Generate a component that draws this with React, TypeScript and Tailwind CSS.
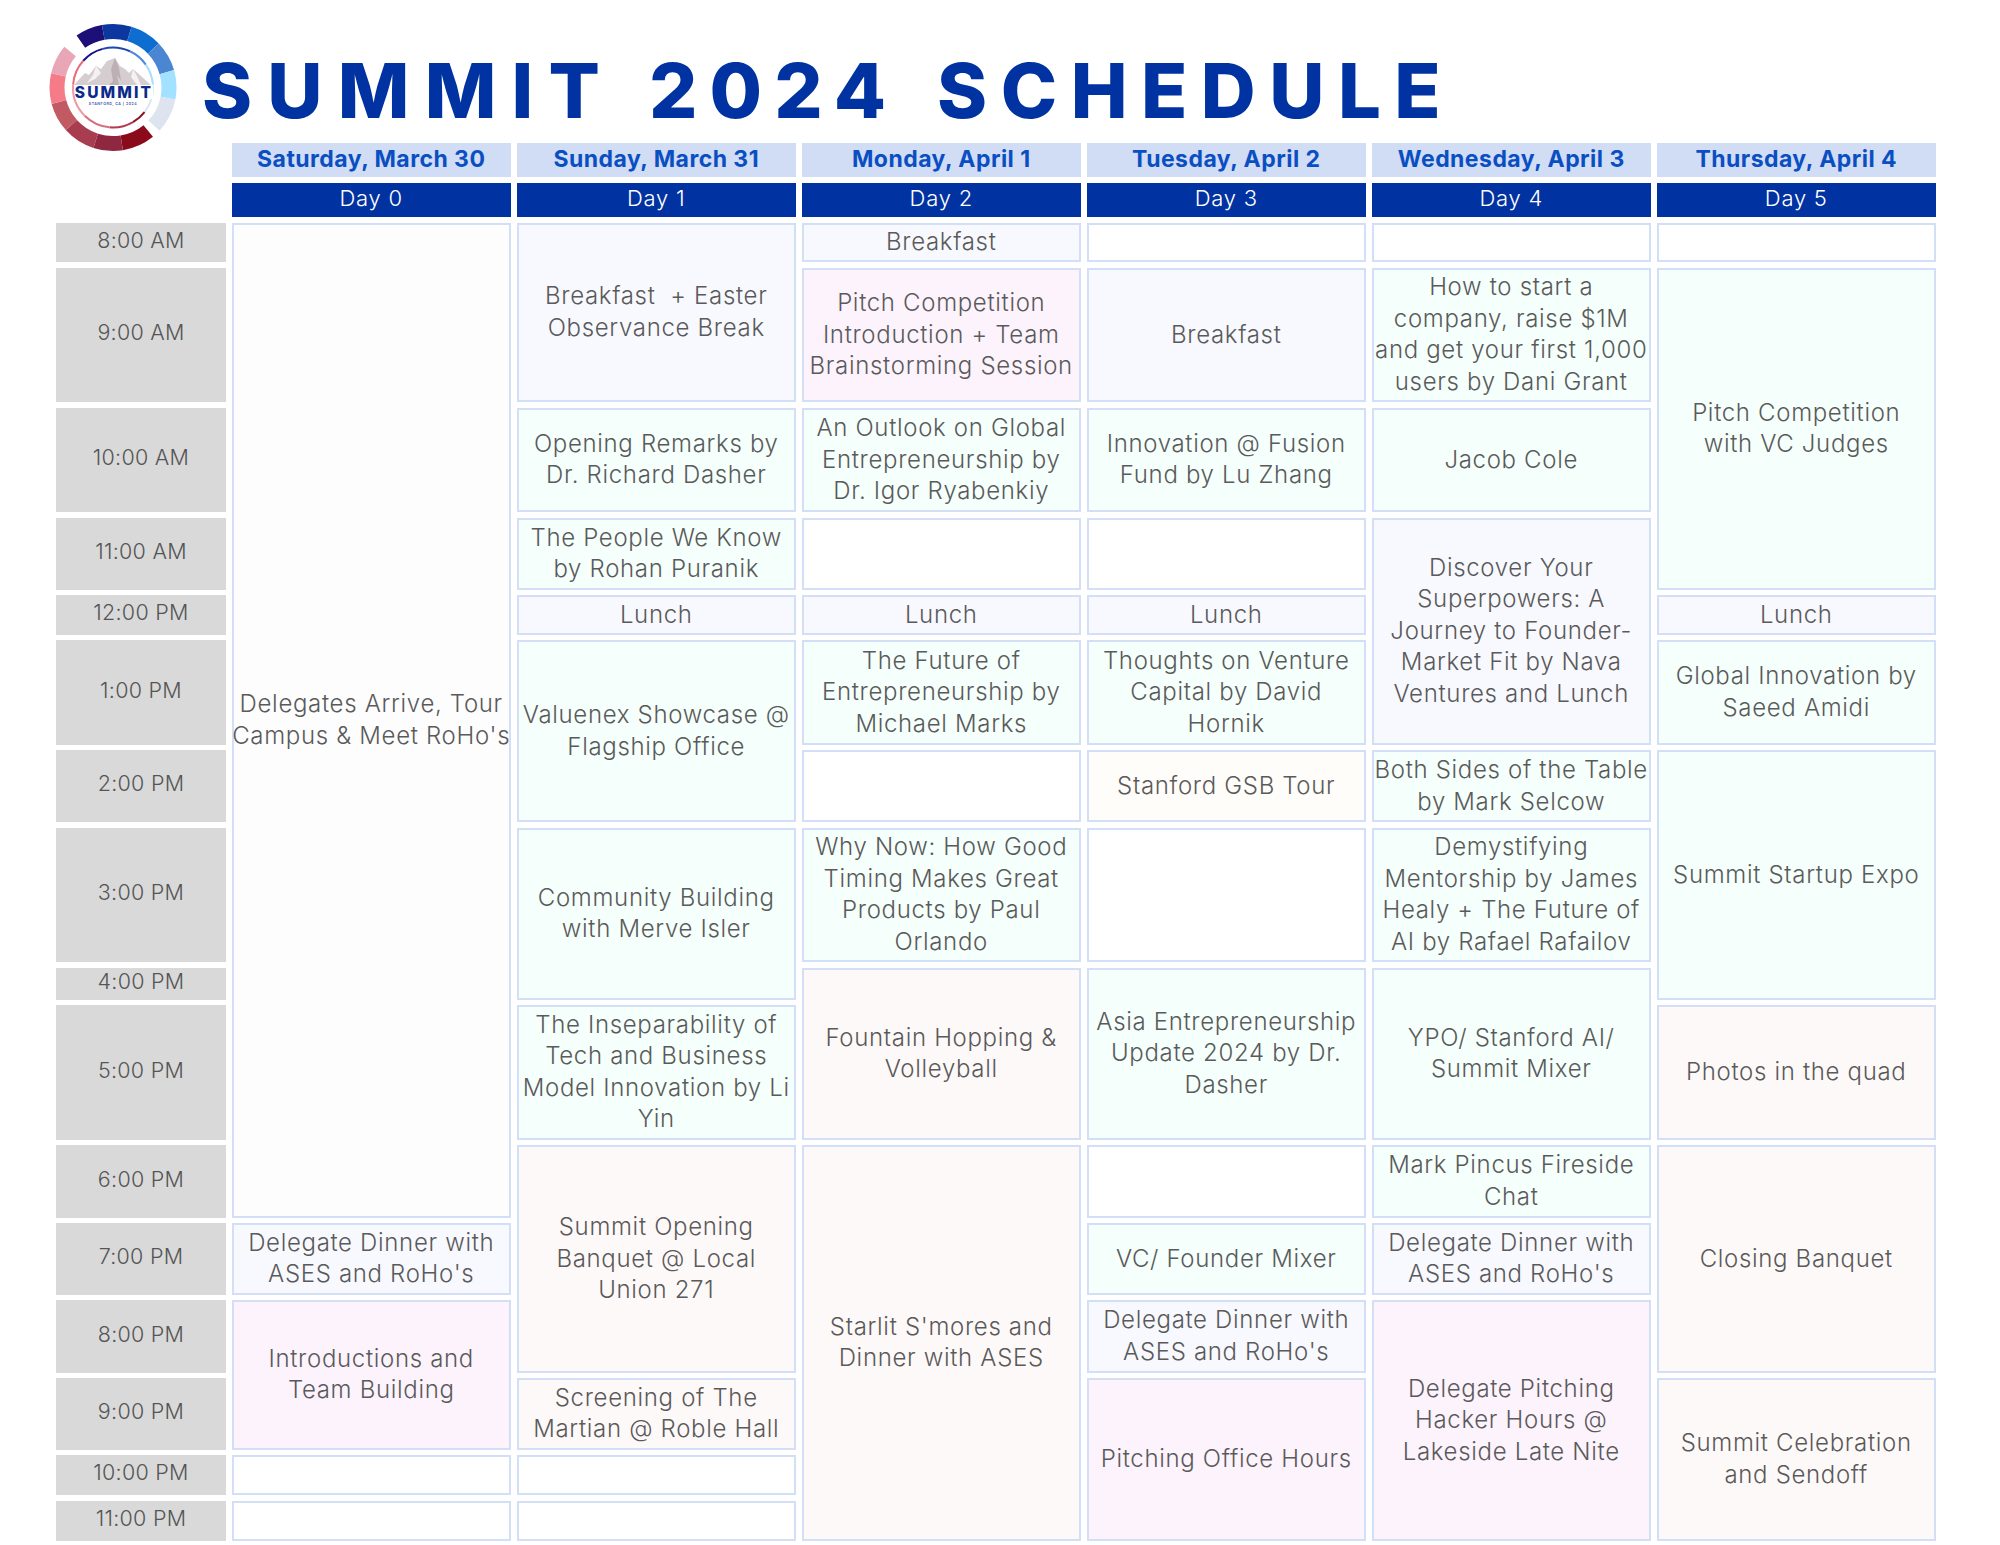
import React from "react";

const mint = "bg-[#f5fffc]";
const lav = "bg-[#f8f9ff]";
const pink = "bg-[#fdf3fd]";
const peach = "bg-[#fef9f9]";
const beige = "bg-[#fffdf9]";
const none = "bg-white";

type C = { cls: string; bg: string; t?: string[] };

const days: { name: string; day: string; col: string; cells: C[] }[] = [
  {
    name: "Saturday, March 30", day: "Day 0", col: "col-start-2",
    cells: [
      { cls: "row-[3/14]", bg: "bg-[#fdfdfe]", t: ["Delegates Arrive, Tour", "Campus & Meet RoHo's"] },
      { cls: "row-[14/15]", bg: lav, t: ["Delegate Dinner with", "ASES and RoHo's"] },
      { cls: "row-[15/17]", bg: pink, t: ["Introductions and", "Team Building"] },
      { cls: "row-[17/18]", bg: none },
      { cls: "row-[18/19]", bg: none },
    ],
  },
  {
    name: "Sunday, March 31", day: "Day 1", col: "col-start-3",
    cells: [
      { cls: "row-[3/5]", bg: lav, t: ["Breakfast  + Easter", "Observance Break"] },
      { cls: "row-[5/6]", bg: mint, t: ["Opening Remarks by", "Dr. Richard Dasher"] },
      { cls: "row-[6/7]", bg: mint, t: ["The People We Know", "by Rohan Puranik"] },
      { cls: "row-[7/8]", bg: lav, t: ["Lunch"] },
      { cls: "row-[8/10]", bg: mint, t: ["Valuenex Showcase @", "Flagship Office"] },
      { cls: "row-[10/12]", bg: mint, t: ["Community Building", "with Merve Isler"] },
      { cls: "row-[12/13]", bg: mint, t: ["The Inseparability of", "Tech and Business", "Model Innovation by Li", "Yin"] },
      { cls: "row-[13/16]", bg: peach, t: ["Summit Opening", "Banquet @ Local", "Union 271"] },
      { cls: "row-[16/17]", bg: peach, t: ["Screening of The", "Martian @ Roble Hall"] },
      { cls: "row-[17/18]", bg: none },
      { cls: "row-[18/19]", bg: none },
    ],
  },
  {
    name: "Monday, April 1", day: "Day 2", col: "col-start-4",
    cells: [
      { cls: "row-[3/4]", bg: lav, t: ["Breakfast"] },
      { cls: "row-[4/5]", bg: pink, t: ["Pitch Competition", "Introduction + Team", "Brainstorming Session"] },
      { cls: "row-[5/6]", bg: mint, t: ["An Outlook on Global", "Entrepreneurship by", "Dr. Igor Ryabenkiy"] },
      { cls: "row-[6/7]", bg: none },
      { cls: "row-[7/8]", bg: lav, t: ["Lunch"] },
      { cls: "row-[8/9]", bg: mint, t: ["The Future of", "Entrepreneurship by", "Michael Marks"] },
      { cls: "row-[9/10]", bg: none },
      { cls: "row-[10/11]", bg: mint, t: ["Why Now: How Good", "Timing Makes Great", "Products by Paul", "Orlando"] },
      { cls: "row-[11/13]", bg: peach, t: ["Fountain Hopping &", "Volleyball"] },
      { cls: "row-[13/19]", bg: peach, t: ["Starlit S'mores and", "Dinner with ASES"] },
    ],
  },
  {
    name: "Tuesday, April 2", day: "Day 3", col: "col-start-5",
    cells: [
      { cls: "row-[3/4]", bg: none },
      { cls: "row-[4/5]", bg: lav, t: ["Breakfast"] },
      { cls: "row-[5/6]", bg: mint, t: ["Innovation @ Fusion", "Fund by Lu Zhang"] },
      { cls: "row-[6/7]", bg: none },
      { cls: "row-[7/8]", bg: lav, t: ["Lunch"] },
      { cls: "row-[8/9]", bg: mint, t: ["Thoughts on Venture", "Capital by David", "Hornik"] },
      { cls: "row-[9/10]", bg: beige, t: ["Stanford GSB Tour"] },
      { cls: "row-[10/11]", bg: none },
      { cls: "row-[11/13]", bg: mint, t: ["Asia Entrepreneurship", "Update 2024 by Dr.", "Dasher"] },
      { cls: "row-[13/14]", bg: none },
      { cls: "row-[14/15]", bg: mint, t: ["VC/ Founder Mixer"] },
      { cls: "row-[15/16]", bg: lav, t: ["Delegate Dinner with", "ASES and RoHo's"] },
      { cls: "row-[16/19]", bg: pink, t: ["Pitching Office Hours"] },
    ],
  },
  {
    name: "Wednesday, April 3", day: "Day 4", col: "col-start-6",
    cells: [
      { cls: "row-[3/4]", bg: none },
      { cls: "row-[4/5]", bg: mint, t: ["How to start a", "company, raise $1M", "and get your first 1,000", "users by Dani Grant"] },
      { cls: "row-[5/6]", bg: mint, t: ["Jacob Cole"] },
      { cls: "row-[6/9]", bg: lav, t: ["Discover Your", "Superpowers: A", "Journey to Founder-", "Market Fit by Nava", "Ventures and Lunch"] },
      { cls: "row-[9/10]", bg: mint, t: ["Both Sides of the Table", "by Mark Selcow"] },
      { cls: "row-[10/11]", bg: mint, t: ["Demystifying", "Mentorship by James", "Healy + The Future of", "AI by Rafael Rafailov"] },
      { cls: "row-[11/13]", bg: mint, t: ["YPO/ Stanford AI/", "Summit Mixer"] },
      { cls: "row-[13/14]", bg: mint, t: ["Mark Pincus Fireside", "Chat"] },
      { cls: "row-[14/15]", bg: lav, t: ["Delegate Dinner with", "ASES and RoHo's"] },
      { cls: "row-[15/19]", bg: pink, t: ["Delegate Pitching", "Hacker Hours @", "Lakeside Late Nite"] },
    ],
  },
  {
    name: "Thursday, April 4", day: "Day 5", col: "col-start-7",
    cells: [
      { cls: "row-[3/4]", bg: none },
      { cls: "row-[4/7]", bg: mint, t: ["Pitch Competition", "with VC Judges"] },
      { cls: "row-[7/8]", bg: lav, t: ["Lunch"] },
      { cls: "row-[8/9]", bg: mint, t: ["Global Innovation by", "Saeed Amidi"] },
      { cls: "row-[9/12]", bg: mint, t: ["Summit Startup Expo"] },
      { cls: "row-[12/13]", bg: peach, t: ["Photos in the quad"] },
      { cls: "row-[13/16]", bg: peach, t: ["Closing Banquet"] },
      { cls: "row-[16/19]", bg: peach, t: ["Summit Celebration", "and Sendoff"] },
    ],
  },
];

const times: [string, string][] = [
  ["8:00 AM", "row-[3/4]"], ["9:00 AM", "row-[4/5]"], ["10:00 AM", "row-[5/6]"], ["11:00 AM", "row-[6/7]"],
  ["12:00 PM", "row-[7/8]"], ["1:00 PM", "row-[8/9]"], ["2:00 PM", "row-[9/10]"], ["3:00 PM", "row-[10/11]"],
  ["4:00 PM", "row-[11/12]"], ["5:00 PM", "row-[12/13]"], ["6:00 PM", "row-[13/14]"], ["7:00 PM", "row-[14/15]"],
  ["8:00 PM", "row-[15/16]"], ["9:00 PM", "row-[16/17]"], ["10:00 PM", "row-[17/18]"], ["11:00 PM", "row-[18/19]"],
];

function arc(r1: number, r2: number, a0: number, a1: number) {
  const p = (r: number, a: number) => {
    const t = ((a - 90) * Math.PI) / 180;
    return `${(64 + r * Math.cos(t)).toFixed(2)} ${(64.5 + r * Math.sin(t)).toFixed(2)}`;
  };
  const large = a1 - a0 > 180 ? 1 : 0;
  return `M${p(r2, a0)}A${r2} ${r2} 0 ${large} 1 ${p(r2, a1)}L${p(r1, a1)}A${r1} ${r1} 0 ${large} 0 ${p(r1, a0)}Z`;
}

const ring: [number, number, string][] = [
  [-35, -10, "#1d0f78"], [-10, 17, "#0b379f"], [17, 46, "#0d6dd0"], [46, 74, "#4b86d2"], [74, 101, "#a2e1ff"], [101, 133, "#dde4f0"],
  [141, 171, "#8b0a1c"], [171, 198, "#8f2741"], [198, 228, "#a83d50"], [228, 255, "#c15a62"], [255, 283, "#f67b89"], [283, 310, "#e8a6b6"],
];
const thin: [number, number, string][] = [
  [-48, -15, "#14128a"], [-15, 25, "#1c46b0"], [25, 55, "#4f8ada"], [55, 85, "#a9dcff"], [85, 128, "#dbe7f5"],
  [128, 150, "#8b1028"], [150, 185, "#b03c50"], [185, 225, "#d8707c"], [225, 275, "#ef9aa4"], [275, 312, "#e86a7c"],
];

function Logo() {
  return (
    <svg viewBox="0 0 128 129" className="w-[128px] h-[129px] shrink-0">
      {ring.map(([a, b, c]) => <path key={a} d={arc(48.5, 63.5, a, b)} fill={c} />)}
      {thin.map(([a, b, c]) => <path key={a} d={arc(39, 41, a, b)} fill={c} />)}
      <polygon points="25,62 36,50 40,52 47,43 52,46 58,38 66,35 71,43 76,46 80,50 84,46 92,53 103,63" fill="#d6cdd0" />
      <polygon points="66,35 62,46 64,58 60,62 70,62 68,52 72,58 70,45" fill="#bdb0b4" />
      <polygon points="47,43 44,52 38,60 46,56 52,50" fill="#f4f1f2" />
      <polygon points="84,46 82,54 88,62 92,62 88,53" fill="#f4f1f2" />
      <rect x="26" y="62" width="78" height="14" fill="#ffffff" />
      <text x="65" y="74.5" textAnchor="middle" fill="#0b2a8c" fontFamily="Inter, sans-serif" fontWeight="800" fontSize="15.5" letterSpacing="2.1">SUMMIT</text>
      <text x="64" y="82" textAnchor="middle" fill="#3a55a8" fontFamily="Inter, sans-serif" fontWeight="600" fontSize="3.6" letterSpacing="0.5">STANFORD, CA | 2024</text>
    </svg>
  );
}

export default function App() {
  return (
    <div className="w-[2000px] h-[1545px] bg-white overflow-hidden font-['Inter',sans-serif]">
      <div className="h-[143px] flex pl-[49px] pt-[23px]">
        <Logo />
        <h1 className="ml-[25px] mt-[21px] text-[76px] leading-[92px] font-extrabold text-[#0033a1] whitespace-pre">
          <span className="tracking-[0.2em]">SUMMIT </span>
          <span className="ml-[2px] tracking-[0.16em]">2024 </span>
          <span className="ml-[10px] tracking-[0.177em]">SCHEDULE</span>
        </h1>
      </div>
      <div className="ml-[56px] grid grid-cols-[170px_repeat(6,279.5px)] grid-rows-[34px_34.5px_39.5px_134.5px_104.5px_72px_39.5px_104.5px_72px_134.5px_32px_134.5px_72.5px_71.5px_72.5px_71.5px_40px_40px] gap-[5.5px]">
        {days.map((d) => (
          <React.Fragment key={d.day}>
            <div className={`${d.col} row-[1/2] bg-[#d1dcf5] text-[#0a4fc2] text-[23px] font-bold tracking-[0.02em] flex items-center justify-center pb-[2px] whitespace-nowrap`}>
              {d.name}
            </div>
            <div className={`${d.col} row-[2/3] bg-[#0033a1] text-white text-[22px] font-light tracking-[0.035em] flex items-center justify-center pb-[3px]`}>
              {d.day}
            </div>
            {d.cells.map((c) => (
              <div
                key={c.cls}
                className={`${d.col} ${c.cls} ${c.bg} border-2 border-[#d3def7] flex flex-col items-center justify-center text-center text-[#5a5a5a] text-[24px] font-[350] leading-[31.5px] tracking-[0.028em] pb-[1px] whitespace-pre`}
              >
                {c.t?.map((l) => <span key={l}>{l}</span>)}
              </div>
            ))}
          </React.Fragment>
        ))}
        {times.map(([t, r]) => (
          <div key={t} className={`col-start-1 ${r} bg-[#d9d9d9] text-[#555555] text-[21.5px] font-light tracking-[0.012em] flex items-center justify-center pb-[5px] whitespace-nowrap`}>
            {t}
          </div>
        ))}
      </div>
    </div>
  );
}
